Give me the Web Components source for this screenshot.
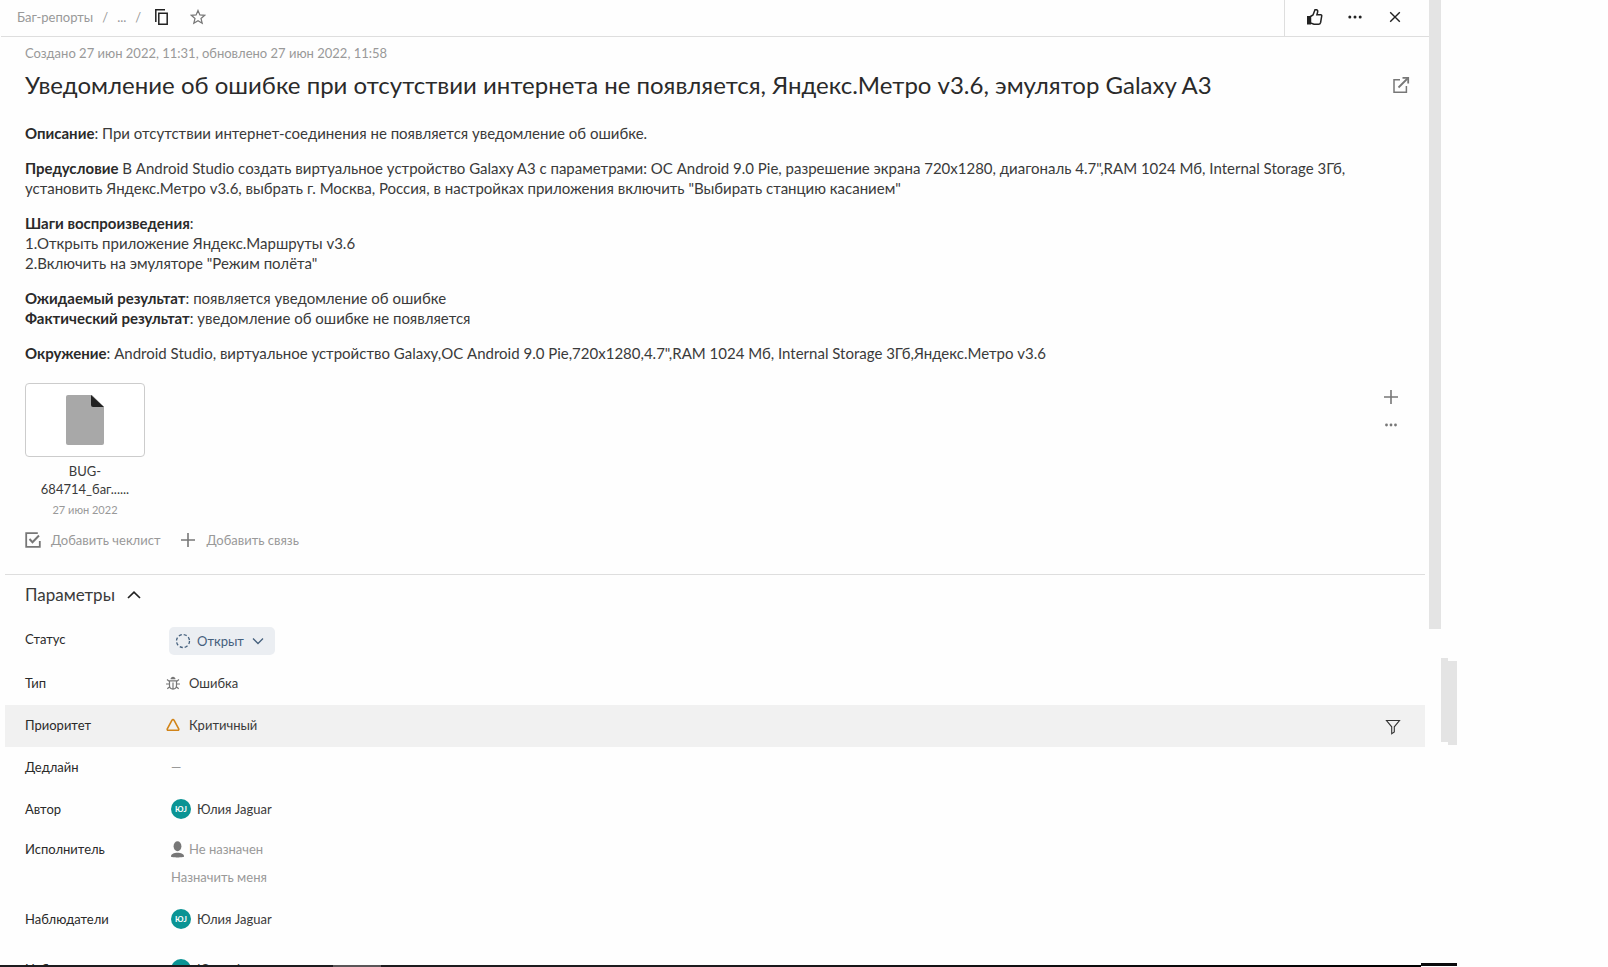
<!DOCTYPE html>
<html lang="ru">
<head>
<meta charset="utf-8">
<title>Баг-репорты</title>
<style>
  html, body { margin: 0; height: 100%; }
  body { overflow: hidden; background: #fefefe; color: #3a3a3a; font: 13px/20px Lato, "Noto Sans", sans-serif; }
</style>
</head>
<body>
<issue-app></issue-app>
<script>
const define = (name, html, setup) => {
  const tpl = document.createElement('template');
  tpl.innerHTML = html;
  customElements.define(name, class extends HTMLElement {
    constructor() {
      super();
      this.attachShadow({ mode: 'open' }).append(tpl.content.cloneNode(true));
    }
    connectedCallback() { if (setup) setup(this, this.shadowRoot); }
  });
};

const stroke = (d, w = 1.5) => `<path fill="none" stroke="currentColor" stroke-width="${w}" d="${d}"/>`;
const icons = {
  copy: [16, 18, stroke('M1.8 14V1.8H11') + stroke('M4.8 5.2h8.4v11H4.8z')],
  star: [16, 16, stroke('M8 1.4l1.9 4.5 4.8.4-3.7 3.2 1.2 4.8L8 11.7l-4.2 2.6L5 9.500 1.300 6.300l4.800-.4z', 1.2)],
  like: [18, 18, '<path fill="currentColor" d="M1 8h4v8.500h-4z"/>' + stroke('M4.500 8.500l2.500-1.500 2-5.200h1.600c1 .3 1.300 1.300 1 2.400l-.7 2.500h3.800c.9 0 1.200.7 1 1.500l-1.100 6.300c-.3 1-1 1.700-2 1.700H8l-3.500-1.200z', 1.5)],
  dots: [16, 16, '<g fill="currentColor"><circle cx="2.800" cy="8" r="1.500"/><circle cx="8" cy="8" r="1.500"/><circle cx="13.200" cy="8" r="1.500"/></g>'],
  dotsSmall: [16, 16, '<g fill="currentColor"><circle cx="3.500" cy="8" r="1.400"/><circle cx="8" cy="8" r="1.400"/><circle cx="12.500" cy="8" r="1.400"/></g>'],
  close: [16, 16, stroke('M3.200 3.200l9.600 9.600M12.800 3.200l-9.600 9.600', 1.4)],
  external: [18, 18, stroke('M8 3.800H2v12.400h12.400V10') + stroke('M6.500 11.500L15.500 2.500', 1.8) + stroke('M10.500 1.900h5.700v5.500', 1.8)],
  plus: [16, 16, stroke('M8 1v14M1 8h14', 1.6)],
  check: [16, 16, stroke('M14.800 9v5.800H1.200V1.200h11.600', 1.8) + stroke('M4.500 7l3 3.200 6.500-6.700', 2)],
  up: [14, 8, stroke('M1 7l6-5.800L13 7', 1.7)],
  down: [12, 8, stroke('M1 1.500l5 5 5-5', 1.3)],
  open: [16, 16, '<circle cx="8" cy="8" r="6.500" fill="none" stroke="currentColor" stroke-width="1.300" stroke-dasharray="3.100 2"/>'],
  bug: [14, 14, '<path fill="currentColor" d="M4.500 3.200C4.500-.2 9.500-.2 9.500 3.200z"/>' + stroke('M3.500 4.800h7v4.700c0 4.700-7 4.700-7 0zM7 6.500V13M3.500 5.500L1 3.500M10.500 5.500L13 3.500M3.500 8H0M10.500 8H14M4 10.500l-2.700 2.300M10 10.500l2.700 2.300', 1.2)],
  critical: [14, 14, stroke('M6 2.200 1.300 10.800c-.3.700 0 1.400.8 1.400h9.800c.8 0 1.100-.7.8-1.400L8 2.200c-.4-.8-1.600-.8-2 0z', 1.6)],
  filter: [16, 16, stroke('M1.500 1.500h13L9.300 7.800v5.200l-2.600 1.700V7.800z', 1.1)],
  person: [13, 17, '<g fill="currentColor"><ellipse cx="6.500" cy="5.300" rx="3.900" ry="5"/><path d="M0 15.500c0-2.400 3-3.700 6.500-3.700s6.500 1.300 6.500 3.700c0 1.200-13 1.200-13 0z"/></g>'],
  file: [38, 50, '<path fill="#a8a8a8" d="M2 0h24l12 12v36a2 2 0 0 1-2 2H2a2 2 0 0 1-2-2V2a2 2 0 0 1 2-2z"/><path fill="#222" d="M25 0l13 12H27a2 2 0 0 1-2-2z"/>']
};

define('ui-icon', `<style>:host{display:inline-flex;flex:none}svg{display:block}</style>`, (el, root) => {
  if (root.querySelector('svg')) return;
  const [w, h, body] = icons[el.getAttribute('name')];
  const box = document.createElement('template');
  box.innerHTML = `<svg width="${w}" height="${h}" viewBox="0 0 ${w} ${h}" aria-hidden="true">${body}</svg>`;
  root.append(box.content);
});

define('icon-button', `
<style>
  :host { display: inline-flex; }
  button { display: flex; align-items: center; justify-content: center; width: var(--w, 28px); height: 28px;
    padding: 0; border: 0; background: none; color: inherit; cursor: pointer; }
</style>
<button type="button"><slot></slot></button>`, (el, root) => {
  root.querySelector('button').setAttribute('aria-label', el.getAttribute('label'));
});

define('issue-header', `
<style>
  :host { display: flex; justify-content: space-between; height: 36px; margin-left: 1px; border-bottom: 1px solid #dedede; }
  nav { display: flex; align-items: center; padding: 0 0 3px 16px; color: #999; }
  a { color: inherit; text-decoration: none; }
  .gap { margin: 0 9px; }
  .copy { --w: 28px; margin-left: -2px; color: #222; }
  .star { --w: 28px; margin-left: 8px; color: #777; }
  .tools { display: flex; align-items: center; padding: 0 14px 3px 10px; border-left: 1px solid #dedede; color: #222; --w: 40px; }
</style>
<nav aria-label="Путь">
  <a href="#queue">Баг-репорты</a><span class="gap">/</span><a href="#more">...</a><span class="gap">/</span>
  <icon-button class="copy" label="Скопировать"><ui-icon name="copy"></ui-icon></icon-button>
  <icon-button class="star" label="В избранное"><ui-icon name="star"></ui-icon></icon-button>
</nav>
<div class="tools">
  <icon-button label="Нравится"><ui-icon name="like"></ui-icon></icon-button>
  <icon-button label="Ещё"><ui-icon name="dots"></ui-icon></icon-button>
  <icon-button label="Закрыть"><ui-icon name="close"></ui-icon></icon-button>
</div>`);

define('issue-description', `
<style>
  :host { display: block; margin: 23px 35px 0 0; font-size: 15px; line-height: 20px; }
  p { margin: 0 0 15px; }
  p:last-child { margin: 0; }
  b { font-weight: 700; color: #2a2a2a; }
</style>
<p><b>Описание</b>: При отсутствии интернет-соединения не появляется уведомление об ошибке.</p>
<p><b>Предусловие</b> В Android Studio создать виртуальное устройство Galaxy A3 с параметрами: ОС Android 9.0 Pie, разрешение экрана 720x1280, диагональ 4.7",RAM 1024 Мб, Internal Storage 3Гб, установить Яндекс.Метро v3.6, выбрать г. Москва, Россия, в настройках приложения включить "Выбирать станцию касанием"</p>
<p><b>Шаги воспроизведения</b>:<br>1.Открыть приложение Яндекс.Маршруты v3.6<br>2.Включить на эмуляторе "Режим полёта"</p>
<p><b>Ожидаемый результат</b>: появляется уведомление об ошибке<br><b>Фактический результат</b>: уведомление об ошибке не появляется</p>
<p><b>Окружение</b>: Android Studio, виртуальное устройство Galaxy,ОС Android 9.0 Pie,720x1280,4.7",RAM 1024 Мб, Internal Storage 3Гб,Яндекс.Метро v3.6</p>`);

define('issue-attachments', `
<style>
  :host { display: flex; justify-content: space-between; margin-top: 20px; padding-right: 10px; }
  figure { margin: 0; width: 120px; text-align: center; }
  .thumb { display: flex; align-items: center; justify-content: center; box-sizing: border-box; height: 74px;
    border: 1px solid #ccc; border-radius: 4px; background: #fff; }
  .name { display: block; margin-top: 5px; line-height: 18px; }
  .date { display: block; margin-top: 4px; font-size: 11px; line-height: 16px; color: #999; }
  .side { display: flex; flex-direction: column; color: #777; }
</style>
<figure>
  <div class="thumb"><ui-icon name="file"></ui-icon></div>
  <figcaption><span class="name">BUG-<br>684714_баг......</span><span class="date">27 июн 2022</span></figcaption>
</figure>
<div class="side">
  <icon-button label="Добавить файл"><ui-icon name="plus"></ui-icon></icon-button>
  <icon-button label="Действия"><ui-icon name="dotsSmall"></ui-icon></icon-button>
</div>`);

define('text-button', `
<style>
  :host { display: inline-flex; }
  button { display: flex; align-items: center; gap: 10px; padding: 0; border: 0; background: none; font: inherit; color: #999; cursor: pointer; }
  ::slotted(ui-icon) { color: #777; }
</style>
<button type="button"><slot name="icon"></slot><slot></slot></button>`);

define('user-chip', `
<style>
  :host { display: inline-flex; align-items: center; gap: 6px; }
  .avatar { display: flex; align-items: center; justify-content: center; width: 20px; height: 20px; border-radius: 50%;
    background: #0a9494; color: #fff; font-size: 8px; line-height: 20px; font-weight: 700; }
</style>
<span class="avatar">ЮJ</span><slot></slot>`);

define('status-menu', `
<style>
  :host { display: inline-flex; }
  button { display: flex; align-items: center; gap: 6px; height: 28px; padding: 0 11px 0 6px; border: 0; border-radius: 5px;
    background: #ebeef2; font: inherit; color: #45607d; cursor: pointer; }
  .arrow { margin-left: 2px; }
</style>
<button type="button" aria-haspopup="listbox"><ui-icon name="open"></ui-icon><slot></slot><ui-icon class="arrow" name="down"></ui-icon></button>`);

define('param-row', `
<style>
  :host { display: grid; grid-template-columns: 141px 1fr auto; align-items: start; box-sizing: border-box; min-height: 42px;
    padding: 10px 18px 12px 20px; }
  :host([active]) { background: #f1f1f1; }
  :host([spaced]) { padding-bottom: 20px; }
  :host([tight]) { min-height: 40px; padding-bottom: 10px; }
  :host([head]) { padding-bottom: 14px; }
  .label { color: #2a2a2a; }
  .value { display: flex; flex-direction: column; align-items: flex-start; gap: 8px; padding-left: 5px; }
  :host([kind=icon]) .value { padding-left: 0; }
  :host([kind=menu]) .value { padding-left: 3px; margin: -2px 0 -6px; }
</style>
<span class="label"><slot name="label"></slot></span>
<div class="value"><slot></slot></div>
<slot name="action"></slot>`);

define('issue-params', `
<style>
  :host { display: block; margin: 24px 4px 0 5px; border-top: 1px solid #dedede; }
  h2 { margin: 0; font: 17px/24px Lato, "Noto Sans", sans-serif; }
  h2 button { display: flex; align-items: center; gap: 12px; padding: 8px 20px 12px; border: 0; background: none; font: inherit; color: inherit; cursor: pointer; }
  h2 ui-icon { color: #222; }
  .line { display: flex; align-items: center; gap: 9px; }
  .muted { color: #999; }
  .person { gap: 5px; }
  .gray { color: #777; }
  .orange { color: #d18419; }
  a { color: #999; text-decoration: none; }
  .filter { height: 24px; align-items: center; margin-bottom: -4px; color: #333; }
</style>
<h2><button type="button" aria-expanded="true">Параметры<ui-icon name="up"></ui-icon></button></h2>
<param-row kind="menu" head><span slot="label">Статус</span><status-menu>Открыт</status-menu></param-row>
<param-row kind="icon"><span slot="label">Тип</span><span class="line"><ui-icon class="gray" name="bug"></ui-icon>Ошибка</span></param-row>
<param-row kind="icon" active><span slot="label">Приоритет</span><span class="line"><ui-icon class="orange" name="critical"></ui-icon>Критичный</span>
  <icon-button class="filter" slot="action" label="Фильтр"><ui-icon name="filter"></ui-icon></icon-button></param-row>
<param-row><span slot="label">Дедлайн</span><span class="muted">—</span></param-row>
<param-row tight><span slot="label">Автор</span><user-chip>Юлия Jaguar</user-chip></param-row>
<param-row><span slot="label">Исполнитель</span><span class="line person muted"><ui-icon class="gray" name="person"></ui-icon>Не назначен</span><a href="#assign">Назначить меня</a></param-row>
<param-row spaced><span slot="label">Наблюдатели</span><user-chip>Юлия Jaguar</user-chip></param-row>
<param-row><span slot="label">Наблюдатели</span><user-chip>Юлия Jaguar</user-chip></param-row>`);

define('page-rail', `
<style>
  :host { display: grid; grid-template-columns: 12px 7px 9px; align-content: start; height: 100%; }
  i { background: #e4e4e4; }
  .main { height: 65vh; }
  .back { grid-column: 2; grid-row: 2; height: 84px; margin-top: 29px; }
  .front { grid-column: 3; grid-row: 2; height: 84px; margin-top: 32px; }
</style>
<i class="main"></i><i class="back"></i><i class="front"></i>`);

define('task-strip', `
<style>
  :host { position: fixed; left: 0; right: 0; bottom: 0; display: grid; grid-template-columns: 1fr 36px 151px; align-items: end; }
  .long { height: 2px; background: linear-gradient(90deg, #1d1b1e 0 333px, #5a5658 333px 381px, #1d1b1e 381px 700px, #000); }
  .step { height: 3px; margin-bottom: 1px; background: #0a0a0c; }
</style>
<div class="long"></div><div class="step"></div>`);

define('issue-app', `
<style>
  :host { display: grid; grid-template-columns: 1fr 179px; height: 100vh; overflow: hidden; }
  main { min-width: 0; }
  article { padding: 6px 14px 0 25px; }
  .meta { margin: 0; color: #999; }
  .title { display: flex; justify-content: space-between; align-items: center; margin-top: 7px; color: #777; }
  h1 { margin: 0; font-size: 24px; line-height: 30px; font-weight: 400; color: #2a2a2a; }
  .add { display: flex; gap: 20px; margin-top: 12px; }
</style>
<main>
  <issue-header></issue-header>
  <article>
    <p class="meta">Создано 27 июн 2022, 11:31, обновлено 27 июн 2022, 11:58</p>
    <div class="title">
      <h1>Уведомление об ошибке при отсутствии интернета не появляется, Яндекс.Метро v3.6, эмулятор Galaxy A3</h1>
      <icon-button label="Открыть в новой вкладке"><ui-icon name="external"></ui-icon></icon-button>
    </div>
    <issue-description></issue-description>
    <issue-attachments></issue-attachments>
    <div class="add">
      <text-button><ui-icon slot="icon" name="check"></ui-icon>Добавить чеклист</text-button>
      <text-button><ui-icon slot="icon" name="plus"></ui-icon>Добавить связь</text-button>
    </div>
  </article>
  <issue-params></issue-params>
</main>
<page-rail></page-rail>
<task-strip></task-strip>`);
</script>
</body>
</html>
